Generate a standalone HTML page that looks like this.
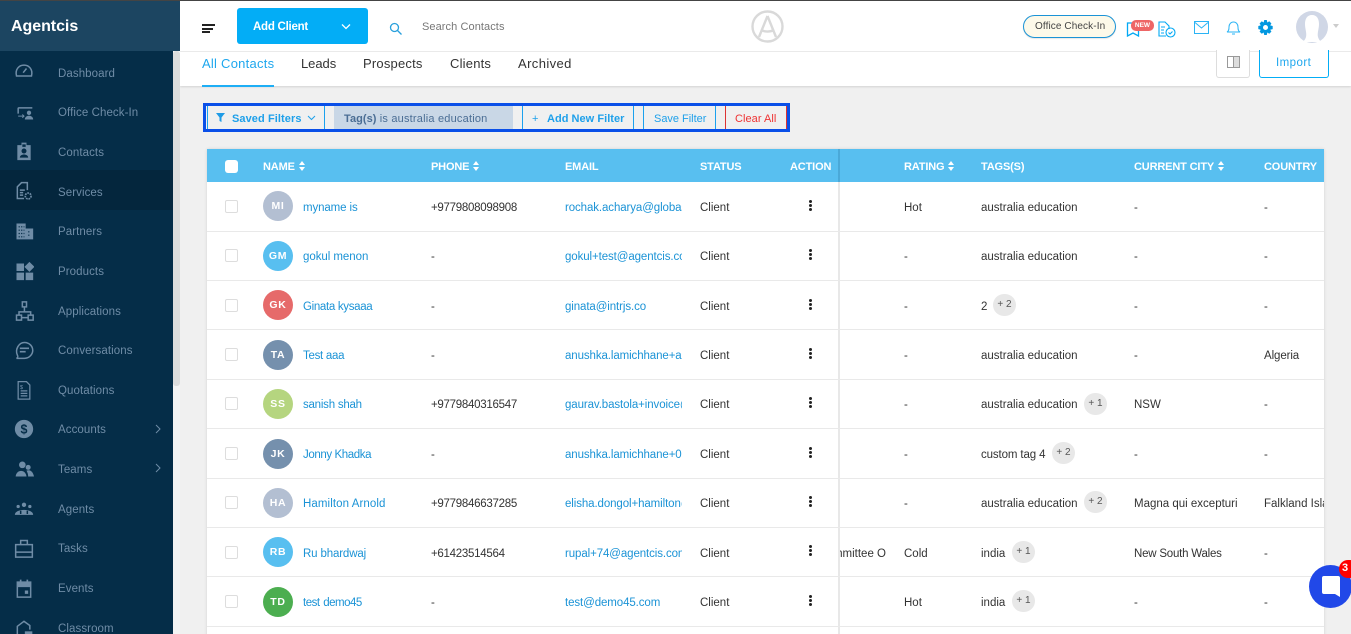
<!DOCTYPE html>
<html lang="en"><head><meta charset="utf-8"><title>Agentcis Contacts</title>
<style>
*{box-sizing:border-box}
html,body{margin:0;padding:0;width:1351px;height:634px;overflow:hidden}
body{background:#f0f0f0;position:relative;font-family:"Liberation Sans",sans-serif;font-size:11.5px;color:#333;letter-spacing:0}
.a,.t,.n,.h,.l,.c,.m,.s{position:absolute;white-space:nowrap}
.a{display:block}
.t{transform:translateY(-50%);line-height:14px;margin-top:2px}
.s{left:58px;color:#6f8ca6;transform:translateY(-50%);font-size:11.5px;line-height:14px;letter-spacing:.08px;margin-top:2px}
.i{position:absolute;left:14px;width:20px;height:20px;margin-top:2px;fill:none;stroke:#6f8ca6;stroke-width:1.8}
.f{fill:#6f8ca6;stroke:none}
.h{top:166px;transform:translateY(-50%);color:#fff;font-weight:bold;font-size:11px;line-height:14px;letter-spacing:-.15px;margin-top:1px}
.h svg{margin-left:1px;vertical-align:-1px}
.l{color:#1b93d6;transform:translateY(-50%);line-height:14px;margin-top:2px}
.e{letter-spacing:-.1px;width:117px;overflow:hidden}
.c{left:263px;width:30px;height:30px;border-radius:50%;color:#fff;font-weight:bold;font-size:10.5px;line-height:30px;text-align:center;letter-spacing:.7px}
.m{left:225px;width:13px;height:13px;border:1px solid #ddd;border-radius:2px;background:#fff}
.p{position:absolute;height:22px;border-radius:11px;background:#e8e8e8;color:#555;font-size:10px;line-height:22px;text-align:center;width:23px;transform:translateY(-50%)}
.r{position:absolute;left:207px;width:1117px;height:1px;background:#e9e9e9}
.d{position:absolute;left:809px;width:4px;height:14px}
.d i{display:block;width:3px;height:3px;background:#222;border-radius:50%;margin:0 0 1px}
.o{position:absolute;height:2px;background:#222}
.fb{position:absolute;top:106px;height:23px;border-left:1px solid #1ba1ee;width:1px}
.ph{letter-spacing:-.28px}
</style></head><body>

<div class="a" style="left:0;top:0;width:1351px;height:1px;background:#444;z-index:5"></div>

<!-- Main white panel -->
<div class="a" style="left:180px;top:1px;width:1171px;height:50px;background:#fff"></div>
<div class="a" style="left:180px;top:51px;width:1171px;height:1px;background:#ececec"></div>
<div class="a" style="left:180px;top:52px;width:1171px;height:34px;background:#fff;box-shadow:0 1px 2px rgba(0,0,0,.12)"></div>

<!-- Sidebar -->
<div class="a" style="left:0;top:1px;width:180px;height:50px;background:#1c4561"></div>
<div class="t" style="left:11px;top:25px;color:#fff;font-weight:bold;font-size:16px;line-height:20px;letter-spacing:-.05px">Agentcis</div>
<div class="a" style="left:0;top:51px;width:173px;height:583px;background:#052d48"></div>
<div class="a" style="left:0;top:170px;width:173px;height:40px;background:#04263d"></div>
<div class="a" style="left:173px;top:51px;width:7px;height:583px;background:#f4f4f4"></div>
<div class="a" style="left:173px;top:51px;width:7px;height:335px;background:#ddd;border-radius:3px"></div>

<div class="s" style="top:72px">Dashboard</div>
<div class="s" style="top:111px">Office Check-In</div>
<div class="s" style="top:151px">Contacts</div>
<div class="s" style="top:191px">Services</div>
<div class="s" style="top:230px">Partners</div>
<div class="s" style="top:270px">Products</div>
<div class="s" style="top:310px">Applications</div>
<div class="s" style="top:349px">Conversations</div>
<div class="s" style="top:389px">Quotations</div>
<div class="s" style="top:428px">Accounts</div>
<div class="s" style="top:468px">Teams</div>
<div class="s" style="top:508px">Agents</div>
<div class="s" style="top:547px">Tasks</div>
<div class="s" style="top:587px">Events</div>
<div class="s" style="top:627px">Classroom</div>

<svg class="i" style="top:59px" viewBox="0 0 24 24"><path d="M3 18c-2-8 3-13 9-13s11 5 9 13z"/><path d="M11 14l4-5"/></svg>
<svg class="i" style="top:100px" viewBox="0 0 24 24"><path d="M5 14v-6q0-1 1-1h16"/><path d="M5 17h7M10 15l2 2-2 2" stroke-width="1.2"/><circle class="f" cx="18" cy="13" r="2.6"/><path class="f" d="M13 21c0-6 10-6 10 0z"/></svg>
<svg class="i" style="top:139px" viewBox="0 0 24 24"><path class="f" d="M4 5h5V2h6v3h5v18H4zM10 4v3h4V4z"/><circle cx="12" cy="12" r="3" fill="#052d48" stroke="none"/><path d="M7 20c0-5 10-5 10 0z" fill="#052d48" stroke="none"/></svg>
<svg class="i" style="top:179px" viewBox="0 0 24 24"><path d="M12 21H4V7l5-5h7v9M7 11h6M7 14h4M7 17h4"/><circle cx="17" cy="18" r="3.5" stroke-width="2" stroke-dasharray="2 1"/></svg>
<svg class="i" style="top:219px" viewBox="0 0 24 24"><path class="f" d="M3 3h11v19H3zM14 9h9v13h-9z"/><path d="M5.500 7h7M5.500 11h7M5.500 15h7M5.500 19h7M17 13h3M17 17h3" stroke="#052d48" stroke-width="1.400" stroke-dasharray="1.500 1.500"/></svg>
<svg class="i" style="top:259px" viewBox="0 0 24 24"><path class="f" d="M3 3h9v9H3zM3 14h9v9H3zM14 14h9v9h-9zM18.500 1l6 6-6 6-6-6z"/></svg>
<svg class="i" style="top:299px" viewBox="0 0 24 24"><path d="M10 1h5v6h-5zM3 17h6v6H3zM17 17h6v6h-6zM12.500 7v6M6 17v-4h14v4M9 20h8"/></svg>
<svg class="i" style="top:338px" viewBox="0 0 24 24"><path d="M3 22c2-1 2-2 1-4-3-7 2-15 8.500-15s10 5 10 9.500-4 9.500-10 9.500z"/><path d="M7 10h11M7 14h7" stroke-width="2"/></svg>
<svg class="i" style="top:378px" viewBox="0 0 24 24"><path d="M5 2h10l4 4v17H5zM8 13h8M8 16h8M8 19h8" stroke-width="1.500"/><text x="7" y="11" font-size="7" fill="#6f8ca6" stroke="none">$</text></svg>
<svg class="i" style="top:417px" viewBox="0 0 24 24"><circle class="f" cx="12" cy="12" r="11"/><text x="12" y="17.500" font-size="15" font-weight="bold" text-anchor="middle" fill="#052d48" stroke="none">$</text></svg>
<svg class="i" style="top:457px" viewBox="0 0 24 24"><circle class="f" cx="10" cy="7" r="4"/><circle class="f" cx="17" cy="10" r="3"/><path class="f" d="M2 21c1-9 12-9 13 0zM15 14c5-2 8 2 9 7h-7c0-3-1-5-2-7z"/></svg>
<svg class="i" style="top:497px" viewBox="0 0 24 24"><circle class="f" cx="12" cy="7" r="2.600"/><circle class="f" cx="5" cy="9" r="2"/><circle class="f" cx="19" cy="9" r="2"/><path class="f" d="M1 19c0-8 22-8 22 0z"/><path d="M8 14v4M16 14v4" stroke="#052d48"/></svg>
<svg class="i" style="top:536px" viewBox="0 0 24 24"><path d="M2 8h20v15H2zM8 8V3h8v5M2 17h20"/></svg>
<svg class="i" style="top:576px" viewBox="0 0 24 24"><path d="M4 5h16v18H4z"/><path class="f" d="M4 5h16v6H4zM7 2h2v4H7zM15 2h2v4h-2zM13 15h4v4h-4z"/></svg>
<svg class="i" style="top:616px" viewBox="0 0 24 24"><path d="M4 22V10l8-6 7 5v5"/><path class="f" d="M13 16h9v7h-9z"/></svg>
<svg class="a" style="left:154px;top:424px" width="8" height="10" viewBox="0 0 8 10" fill="none" stroke="#6f8ca6"><path d="M2 1l4 4-4 4"/></svg>
<svg class="a" style="left:154px;top:463px" width="8" height="10" viewBox="0 0 8 10" fill="none" stroke="#6f8ca6"><path d="M2 1l4 4-4 4"/></svg>

<!-- Top bar -->
<div class="o" style="left:202px;top:24px;width:13px"></div>
<div class="o" style="left:202px;top:27.500px;width:11px"></div>
<div class="o" style="left:202px;top:31px;width:8px"></div>
<div class="a" style="left:237px;top:8px;width:131px;height:36px;background:#03adf6;border-radius:3px"></div>
<div class="t" style="left:253px;top:25px;color:#fff;font-weight:bold;font-size:11.5px;letter-spacing:-.25px">Add Client</div>
<svg class="a" style="left:340px;top:23px" width="12" height="8" viewBox="0 0 12 8" fill="none" stroke="#fff" stroke-width="1.300"><path d="M2 1.500l4 4 4-4"/></svg>
<svg class="a" style="left:389px;top:22px" width="14" height="14" viewBox="0 0 14 14" fill="none" stroke="#2aa0dc" stroke-width="1.300"><circle cx="5.500" cy="5.500" r="4"/><path d="M8.500 8.500l4 4"/></svg>
<div class="t" style="left:422px;top:25px;color:#777;font-size:11px;letter-spacing:.08px">Search Contacts</div>
<svg class="a" style="left:751px;top:10px" width="33" height="33" viewBox="0 0 33 33" fill="none" stroke="#d9d9d9" stroke-width="2.400"><circle cx="16.500" cy="16.500" r="15"/><path d="M16.500 6L8 27M16.500 6L25 27M10 20c4 2 9 2 13 0" stroke-width="2.400"/></svg>
<div class="a" style="left:1023px;top:15px;width:93px;height:23px;border:1px solid #1b93d6;border-radius:12px;background:#fdf9e9;box-shadow:0 1px 1px rgba(0,0,0,.1)"></div>
<div class="t" style="left:1035px;top:25px;font-size:10px;color:#444;letter-spacing:.1px">Office Check-In</div>
<svg class="a" style="left:1126px;top:22px" width="14" height="15" viewBox="0 0 14 15" fill="none" stroke="#03a9f4" stroke-width="1.300"><path d="M1.500 1h11v13l-5.500-3-5.500 3z"/></svg>
<div class="a" style="left:1131px;top:20px;width:23px;height:11px;background:#e66;border-radius:5px;color:#fff;font-size:6.500px;font-weight:bold;line-height:11px;text-align:center;letter-spacing:0">NEW</div>
<svg class="a" style="left:1158px;top:21px" width="18" height="17" viewBox="0 0 18 17" fill="none" stroke="#03a9f4" stroke-width="1.100"><path d="M8 15H1V1h6l4 4v3M3 6h4M3 9h3M3 12h3"/><circle cx="12.500" cy="11.500" r="4.500"/><path d="M10.500 11.500l1.500 1.500 2.500-2.500"/></svg>
<svg class="a" style="left:1194px;top:21px" width="15" height="13" viewBox="0 0 15 13" fill="none" stroke="#2bb4f5" stroke-width="1"><path d="M.5.500h14v12H.500zM1 1.500l6.500 5.500L14 1.500"/></svg>
<svg class="a" style="left:1226px;top:20px" width="15" height="15" viewBox="0 0 15 15" fill="none" stroke="#2bb4f5" stroke-width="1"><path d="M1 12c2-1 2-3 2-5 0-3 2-5 4.500-5S12 4 12 7c0 2 0 4 2 5zM6 14h3"/></svg>
<svg class="a" style="left:1258px;top:20px" width="15" height="15" viewBox="0 0 24 24"><path fill="#0398e0" d="M10 0h4l1 4 3-2 3.500 3.500-2 3 4 1v5l-4 1 2 3-3.500 3.500-3-2-1 4h-4l-1-4-3 2L2.500 18.500l2-3-4-1v-5l4-1-2-3L6 2l3 2zM12 8a4 4 0 100 8 4 4 0 000-8z"/></svg>
<svg class="a" style="left:1296px;top:11px" width="32" height="32" viewBox="0 0 32 32"><circle cx="16" cy="16" r="16" fill="#d0d7e6"/><path fill="#fff" d="M16 4c-5 0-7 4-7 9 0 5 2 9 1 13-1 3-2 4-4 5h20c-2-1-3-2-4-5-1-4 1-8 1-13 0-5-2-9-7-9z"/></svg>
<div class="a" style="left:1333px;top:24px;border:3px solid transparent;border-top:4px solid #ccc"></div>

<!-- Tabs -->
<div class="t" style="left:202px;top:62px;color:#1ea7ee;font-size:13px;letter-spacing:.25px">All Contacts</div>
<div class="t" style="left:301px;top:62px;color:#333;font-size:13px;letter-spacing:-.05px">Leads</div>
<div class="t" style="left:363px;top:62px;color:#333;font-size:13px;letter-spacing:.2px">Prospects</div>
<div class="t" style="left:450px;top:62px;color:#333;font-size:13px;letter-spacing:.2px">Clients</div>
<div class="t" style="left:518px;top:62px;color:#333;font-size:13px;letter-spacing:.4px">Archived</div>
<div class="a" style="left:202px;top:85px;width:72px;height:2px;background:#1eaef5"></div>
<div class="a" style="left:1216px;top:50px;width:34px;height:28px;border:1px solid #ddd;border-top:0;border-radius:0 0 3px 3px;background:#fff"></div>
<svg class="a" style="left:1227px;top:56px" width="13" height="12" viewBox="0 0 13 12" fill="none" stroke="#999"><path d="M.5.500h12v11H.500zM6.500.500v11"/><path d="M7 1h5v10H7z" fill="#ddd" stroke="none"/></svg>
<div class="a" style="left:1259px;top:50px;width:70px;height:28px;border:1px solid #03adf6;border-top:0;border-radius:0 0 3px 3px;background:#fff"></div>
<div class="t" style="left:1276px;top:61px;color:#1ea7ee;font-size:11.500px;letter-spacing:.45px">Import</div>

<!-- Filter bar -->
<div class="a" style="left:203px;top:103px;width:587px;height:29px;border:3px solid #0a4fe8"></div>
<div class="a" style="left:207px;top:106px;width:1px;height:23px;background:#1ba1ee"></div>
<div class="fb" style="left:324px"></div>
<div class="a" style="left:334px;top:106px;width:179px;height:23px;background:#c9d7e6"></div>
<div class="fb" style="left:522px"></div>
<div class="fb" style="left:633px"></div>
<div class="fb" style="left:643px"></div>
<div class="fb" style="left:715px"></div>
<div class="fb" style="left:725px;border-color:#d33"></div>
<div class="fb" style="left:786px;border-color:#d33"></div>
<svg class="a" style="left:216px;top:113px" width="9" height="9" viewBox="0 0 9 9"><path fill="#1e9be6" d="M0 0h9L5.500 4.500V9l-2-1V4.500z"/></svg>
<div class="t" style="left:232px;top:117px;color:#1ea0ea;font-weight:bold;font-size:11px;letter-spacing:.08px">Saved Filters</div>
<svg class="a" style="left:307px;top:115px" width="9" height="6" viewBox="0 0 9 6" fill="none" stroke="#1ea0ea"><path d="M1 1l3.500 3.500L8 1"/></svg>
<div class="t" style="left:344px;top:117px;color:#4a6d94;font-size:11px;letter-spacing:.2px"><b style="letter-spacing:.05px">Tag(s)</b> is australia education</div>
<div class="t" style="left:532px;top:117px;color:#1ea0ea;font-size:11px">+</div>
<div class="t" style="left:547px;top:117px;color:#1ea0ea;font-size:11px;font-weight:bold;letter-spacing:.03px">Add New Filter</div>
<div class="t" style="left:654px;top:117px;color:#1ea0ea;font-size:11px;letter-spacing:-.02px">Save Filter</div>
<div class="t" style="left:735px;top:117px;color:#e33;font-size:11px;letter-spacing:.05px">Clear All</div>

<!-- Table -->
<div class="a" style="left:207px;top:149px;width:1117px;height:490px;background:#fff;box-shadow:0 0 3px rgba(0,0,0,.12)"></div>
<div class="a" style="left:207px;top:149px;width:1117px;height:33px;background:#58bff0"></div>
<div class="a" style="left:838px;top:149px;width:2px;height:490px;background:#e8e8e8"></div>
<div class="a" style="left:838px;top:149px;width:2px;height:33px;background:#4aa9d8"></div>
<div class="a" style="left:225px;top:160px;width:13px;height:13px;background:#fff;border-radius:3px"></div>

<div class="h" style="left:263px">NAME <svg width="6" height="10" viewBox="0 0 6 10"><path fill="#fff" d="M0 4L3 0l3 4zM0 6l3 4 3-4z"/></svg></div>
<div class="h" style="left:431px">PHONE <svg width="6" height="10" viewBox="0 0 6 10"><path fill="#fff" d="M0 4L3 0l3 4zM0 6l3 4 3-4z"/></svg></div>
<div class="h" style="left:565px">EMAIL</div>
<div class="h" style="left:700px">STATUS</div>
<div class="h" style="left:790px">ACTION</div>
<div class="h" style="left:904px">RATING <svg width="6" height="10" viewBox="0 0 6 10"><path fill="#fff" d="M0 4L3 0l3 4zM0 6l3 4 3-4z"/></svg></div>
<div class="h" style="left:981px">TAGS(S)</div>
<div class="h" style="left:1134px">CURRENT CITY <svg width="6" height="10" viewBox="0 0 6 10"><path fill="#fff" d="M0 4L3 0l3 4zM0 6l3 4 3-4z"/></svg></div>
<div class="h" style="left:1264px">COUNTRY</div>

<div class="r" style="top:231px"></div><div class="r" style="top:280px"></div><div class="r" style="top:329px"></div><div class="r" style="top:379px"></div><div class="r" style="top:428px"></div><div class="r" style="top:478px"></div><div class="r" style="top:527px"></div><div class="r" style="top:576px"></div><div class="r" style="top:626px"></div>

<!-- Row checkboxes -->
<div class="m" style="top:200px"></div><div class="m" style="top:249px"></div><div class="m" style="top:299px"></div><div class="m" style="top:348px"></div><div class="m" style="top:397px"></div><div class="m" style="top:447px"></div><div class="m" style="top:496px"></div><div class="m" style="top:546px"></div><div class="m" style="top:595px"></div>

<!-- Avatars -->
<div class="c" style="top:191px;background:#b3bfd2">MI</div>
<div class="c" style="top:241px;background:#58bff0">GM</div>
<div class="c" style="top:290px;background:#e66a6a">GK</div>
<div class="c" style="top:340px;background:#7590ad">TA</div>
<div class="c" style="top:389px;background:#b5d57f">SS</div>
<div class="c" style="top:439px;background:#7590ad">JK</div>
<div class="c" style="top:488px;background:#b3bfd2">HA</div>
<div class="c" style="top:537px;background:#58bff0">RB</div>
<div class="c" style="top:587px;background:#4cae50">TD</div>

<!-- Names -->
<div class="l" style="left:303px;top:206px;letter-spacing:-.11px">myname is</div>
<div class="l" style="left:303px;top:255px;letter-spacing:-.05px">gokul menon</div>
<div class="l" style="left:303px;top:305px;letter-spacing:-.32px">Ginata kysaaa</div>
<div class="l" style="left:303px;top:354px;letter-spacing:-.28px">Test aaa</div>
<div class="l" style="left:303px;top:403px;letter-spacing:-.23px">sanish shah</div>
<div class="l" style="left:303px;top:453px;letter-spacing:-.4px">Jonny Khadka</div>
<div class="l" style="left:303px;top:502px;letter-spacing:.09px">Hamilton Arnold</div>
<div class="l" style="left:303px;top:552px;letter-spacing:-.14px">Ru bhardwaj</div>
<div class="l" style="left:303px;top:601px;letter-spacing:-.5px;word-spacing:1px">test demo45</div>

<!-- Phones -->
<div class="t ph" style="left:431px;top:206px">+9779808098908</div>
<div class="t" style="left:431px;top:255px">-</div>
<div class="t" style="left:431px;top:305px">-</div>
<div class="t" style="left:431px;top:354px">-</div>
<div class="t ph" style="left:431px;top:403px">+9779840316547</div>
<div class="t" style="left:431px;top:453px">-</div>
<div class="t ph" style="left:431px;top:502px">+9779846637285</div>
<div class="t ph" style="left:431px;top:552px">+61423514564</div>
<div class="t" style="left:431px;top:601px">-</div>

<!-- Emails -->
<div class="l e" style="left:565px;top:206px">rochak.acharya@globas</div>
<div class="l e" style="left:565px;top:255px">gokul+test@agentcis.com</div>
<div class="l e" style="left:565px;top:305px">ginata@intrjs.co</div>
<div class="l e" style="left:565px;top:354px">anushka.lamichhane+agent@x.com</div>
<div class="l e" style="left:565px;top:403px">gaurav.bastola+invoice@agentcis.com</div>
<div class="l e" style="left:565px;top:453px">anushka.lamichhane+0@agentcis.com</div>
<div class="l e" style="left:565px;top:502px">elisha.dongol+hamilton@agentcis.com</div>
<div class="l e" style="left:565px;top:552px">rupal+74@agentcis.com</div>
<div class="l e" style="left:565px;top:601px">test@demo45.com</div>

<!-- Status -->
<div class="t" style="left:700px;top:206px">Client</div>
<div class="t" style="left:700px;top:255px">Client</div>
<div class="t" style="left:700px;top:305px">Client</div>
<div class="t" style="left:700px;top:354px">Client</div>
<div class="t" style="left:700px;top:403px">Client</div>
<div class="t" style="left:700px;top:453px">Client</div>
<div class="t" style="left:700px;top:502px">Client</div>
<div class="t" style="left:700px;top:552px">Client</div>
<div class="t" style="left:700px;top:601px">Client</div>

<!-- Action dots -->
<div class="d" style="top:200px"><i></i><i></i><i></i></div>
<div class="d" style="top:249px"><i></i><i></i><i></i></div>
<div class="d" style="top:299px"><i></i><i></i><i></i></div>
<div class="d" style="top:348px"><i></i><i></i><i></i></div>
<div class="d" style="top:397px"><i></i><i></i><i></i></div>
<div class="d" style="top:447px"><i></i><i></i><i></i></div>
<div class="d" style="top:496px"><i></i><i></i><i></i></div>
<div class="d" style="top:545px"><i></i><i></i><i></i></div>
<div class="d" style="top:595px"><i></i><i></i><i></i></div>

<div class="t" style="left:840px;top:552px;width:46px;overflow:hidden;direction:rtl;text-align:left">Committee O</div>

<!-- Rating -->
<div class="t" style="left:904px;top:206px">Hot</div>
<div class="t" style="left:904px;top:255px">-</div>
<div class="t" style="left:904px;top:305px">-</div>
<div class="t" style="left:904px;top:354px">-</div>
<div class="t" style="left:904px;top:403px">-</div>
<div class="t" style="left:904px;top:453px">-</div>
<div class="t" style="left:904px;top:502px">-</div>
<div class="t" style="left:904px;top:552px">Cold</div>
<div class="t" style="left:904px;top:601px">Hot</div>

<!-- Tags -->
<div class="t" style="left:981px;top:206px">australia education</div>
<div class="t" style="left:981px;top:255px">australia education</div>
<div class="t" style="left:981px;top:305px">2</div><div class="p" style="left:993px;top:305px">+ 2</div>
<div class="t" style="left:981px;top:354px">australia education</div>
<div class="t" style="left:981px;top:403px">australia education</div><div class="p" style="left:1084px;top:404px">+ 1</div>
<div class="t" style="left:981px;top:453px;letter-spacing:-.12px">custom tag 4</div><div class="p" style="left:1052px;top:453px">+ 2</div>
<div class="t" style="left:981px;top:502px">australia education</div><div class="p" style="left:1084px;top:502px">+ 2</div>
<div class="t" style="left:981px;top:552px">india</div><div class="p" style="left:1012px;top:552px">+ 1</div>
<div class="t" style="left:981px;top:601px">india</div><div class="p" style="left:1012px;top:601px">+ 1</div>

<!-- City -->
<div class="t" style="left:1134px;top:206px">-</div>
<div class="t" style="left:1134px;top:255px">-</div>
<div class="t" style="left:1134px;top:305px">-</div>
<div class="t" style="left:1134px;top:354px">-</div>
<div class="t" style="left:1134px;top:403px">NSW</div>
<div class="t" style="left:1134px;top:453px">-</div>
<div class="t" style="left:1134px;top:502px">Magna qui excepturi</div>
<div class="t" style="left:1134px;top:552px;letter-spacing:-.22px">New South Wales</div>
<div class="t" style="left:1134px;top:601px">-</div>

<!-- Country -->
<div class="t" style="left:1264px;top:206px">-</div>
<div class="t" style="left:1264px;top:255px">-</div>
<div class="t" style="left:1264px;top:305px">-</div>
<div class="t" style="left:1264px;top:354px;letter-spacing:-.1px">Algeria</div>
<div class="t" style="left:1264px;top:403px">-</div>
<div class="t" style="left:1264px;top:453px">-</div>
<div class="t" style="left:1264px;top:502px;width:60px;overflow:hidden">Falkland Islands</div>
<div class="t" style="left:1264px;top:552px">-</div>
<div class="t" style="left:1264px;top:601px">-</div>

<!-- Chat widget -->
<div class="a" style="left:1309px;top:565px;width:43px;height:43px;border-radius:50%;background:#2148e8"></div>
<svg class="a" style="left:1321px;top:576px" width="20" height="22" viewBox="0 0 20 22"><path fill="#fff" d="M3 0h14q2 0 2 2v19l-5-3H3q-2 0-2-2V2q0-2 2-2z"/></svg>
<div class="a" style="left:1339px;top:560px;width:20px;height:18px;border-radius:9px;background:#f00;color:#fff;font-size:11px;font-weight:bold;line-height:17px;padding-left:3px;letter-spacing:0">3</div>
</body></html>
